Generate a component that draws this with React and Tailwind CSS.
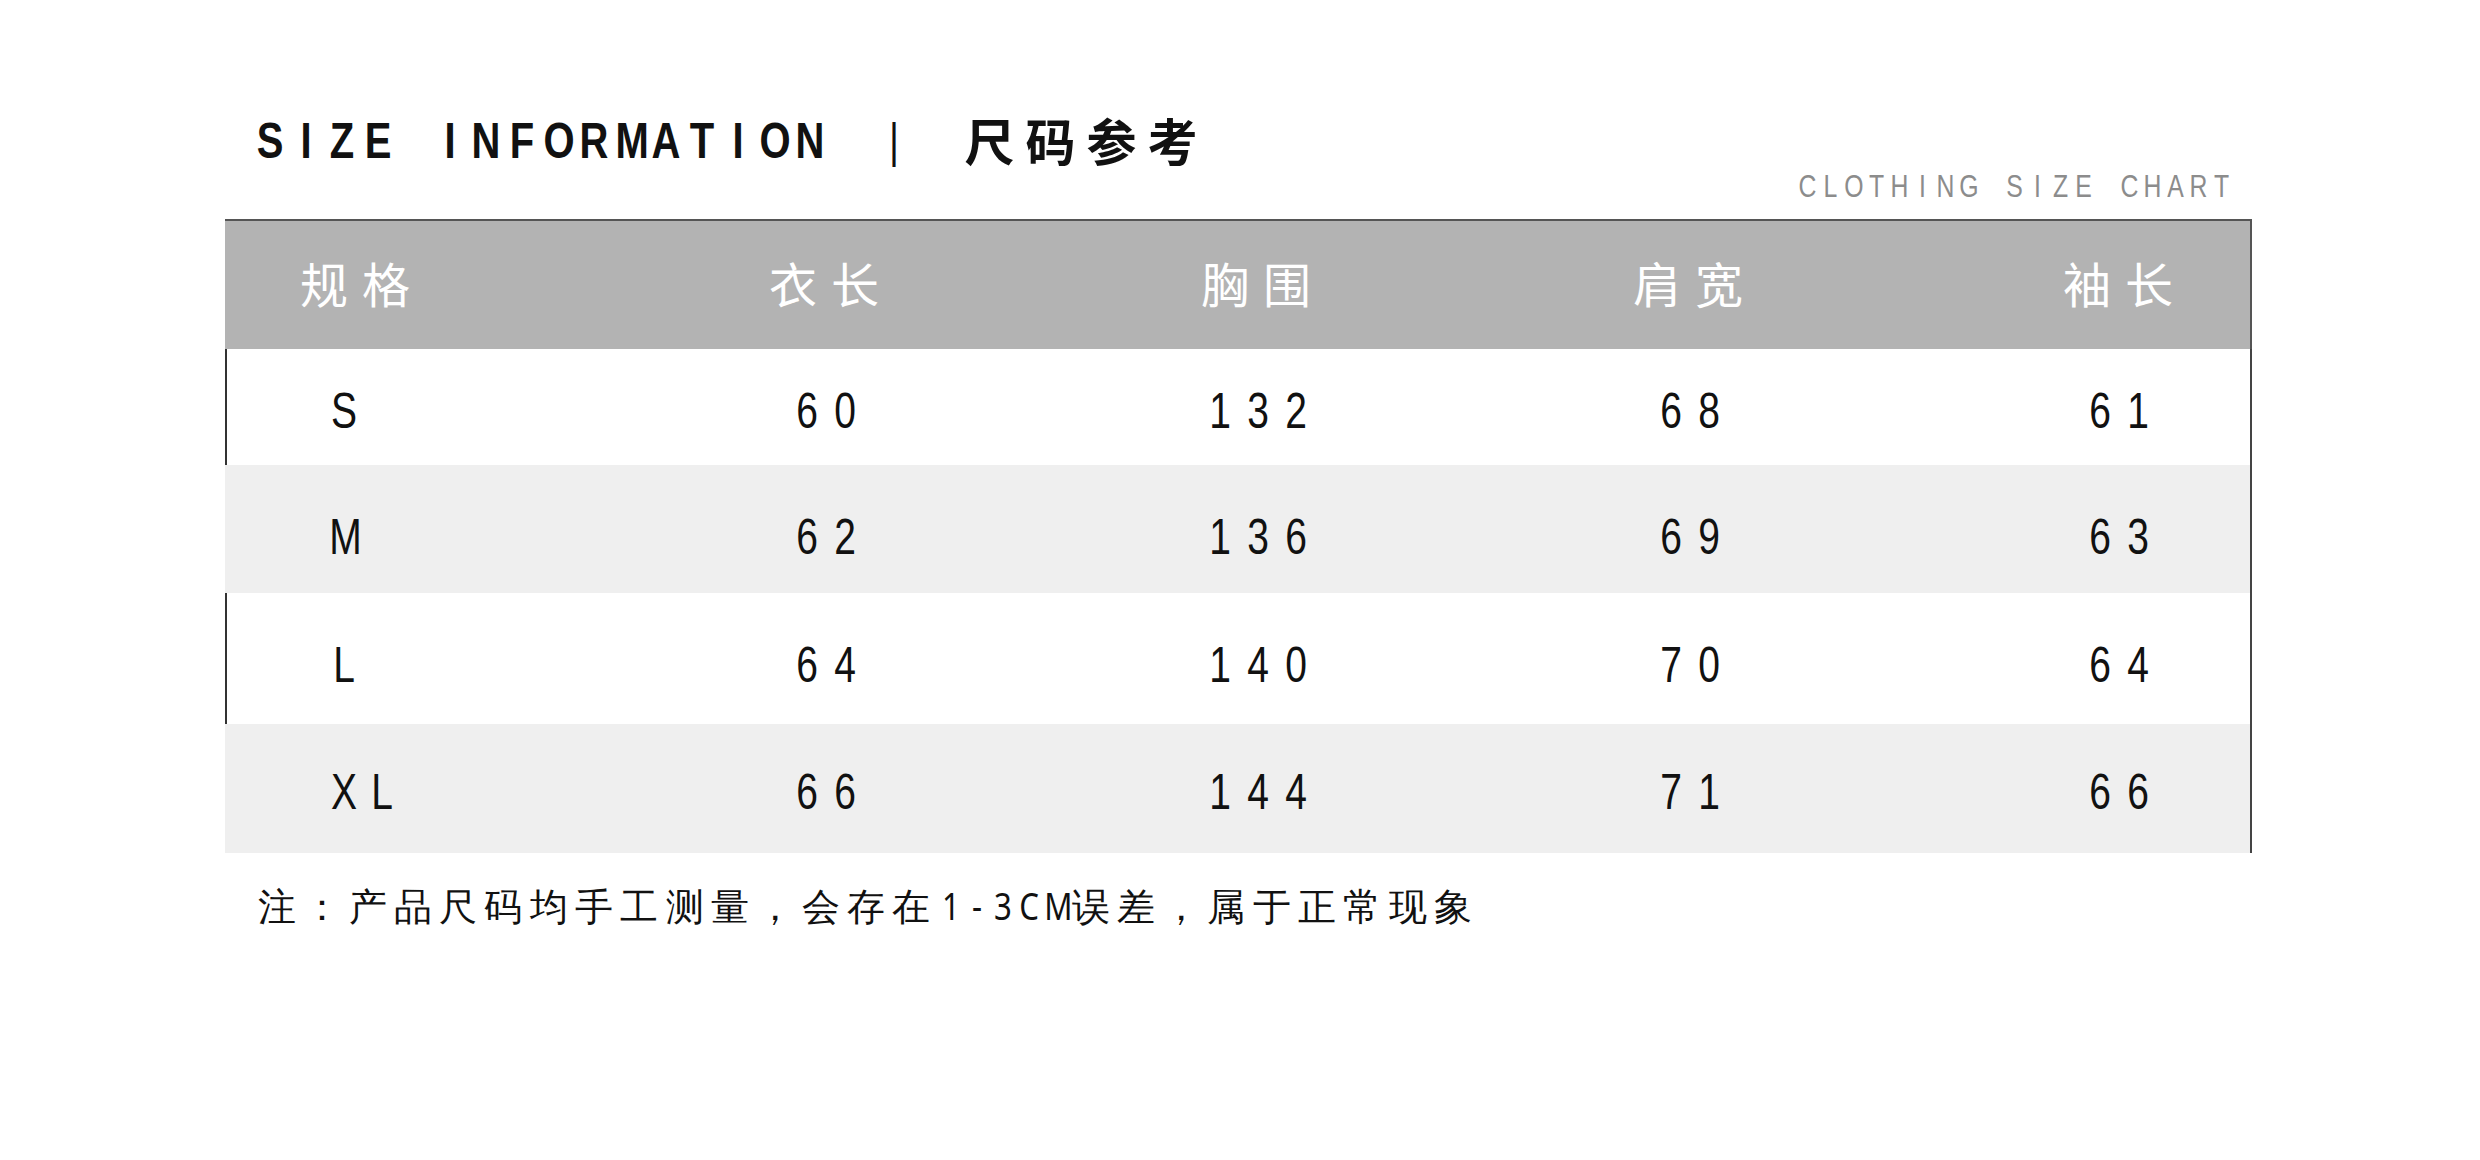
const sans = "font-['Liberation_Sans',Arial,sans-serif]";
const cjk = "font-['Noto_Sans_CJK_SC',sans-serif]";

const rows = [
  { size: "S", vals: ["60", "132", "68", "61"], tone: "bg-white border-l-[#333]", box: "h-[116px] pt-[8px]" },
  { size: "M", vals: ["62", "136", "69", "63"], tone: "bg-[#efefef] border-l-transparent", box: "h-[128px] pt-[16px]" },
  { size: "L", vals: ["64", "140", "70", "64"], tone: "bg-white border-l-[#333]", box: "h-[131px] pt-[12px]" },
  { size: "XL", vals: ["66", "144", "71", "66"], tone: "bg-[#efefef] border-l-transparent", box: "h-[129px] pt-[6px]" },
];

const heads = ["衣长", "胸围", "肩宽", "袖长"];

// the artwork uses evenly pitched, condensed letters: one cell per glyph
function Cells({ text, cell }) {
  return [...text].map((ch, i) => (
    <span key={i} className={cell + " inline-block text-center"}>
      {ch === " " ? "\u00a0" : ch}
    </span>
  ));
}

export default function App() {
  return (
    <div className="w-[2480px] h-[1160px] bg-white overflow-hidden">
      <div className="w-[2252px] pl-[225px] pt-[111px]">
        {/* title */}
        <div className="flex items-center h-[60px] pl-[27px] leading-none text-[#111]">
          <div className={`flex ${sans} font-bold text-[50px]`}>
            <Cells text="SIZE INFORMATION" cell="w-[36px] scale-x-[0.8]" />
          </div>
          <div className={`ml-[48px] w-[36px] text-center ${sans} text-[48px] scale-x-[0.8]`}>|</div>
          <div className={`ml-[47px] flex ${cjk} font-bold text-[50px] pb-[4px]`}>
            <Cells text="尺码参考" cell="w-[61px]" />
          </div>
        </div>

        <div className="flex justify-end items-center h-[30px] pr-[19px] mb-[18px] leading-none">
          <div className={`flex ${sans} text-[31px] text-[#8c8c8c]`}>
            <Cells text="CLOTHING SIZE CHART" cell="w-[23px] scale-x-[0.8]" />
          </div>
        </div>

        {/* table */}
        <div className="w-[2027px]">
          <div className="grid grid-cols-[383px_432px_432px_432px_1fr] items-center h-[130px] pb-[6px] bg-[#b3b3b3] border-t-2 border-r-2 border-[#555] text-white leading-none">
            <div className={`flex pl-[68px] ${cjk} text-[48px]`}>
              <Cells text="规格" cell="w-[62px]" />
            </div>
            {heads.map((h, i) => (
              <div key={h} className={`flex justify-center ${cjk} text-[48px] ${i === 3 ? "pl-[82px]" : ""}`}>
                <Cells text={h} cell="w-[62px]" />
              </div>
            ))}
          </div>

          {rows.map((r) => (
            <div
              key={r.size}
              className={`grid grid-cols-[383px_432px_432px_432px_1fr] items-center border-l-2 border-r-2 border-r-[#444] ${r.tone} ${r.box} ${sans} text-[50px] text-[#111] leading-none`}
            >
              <div className="flex pl-[98px]">
                <Cells text={r.size} cell="w-[38px] scale-x-[0.78]" />
              </div>
              {r.vals.map((v, i) => (
                <div key={i} className={`flex justify-center ${i === 3 ? "pl-[82px]" : ""}`}>
                  <Cells text={v} cell="w-[38px] scale-x-[0.78]" />
                </div>
              ))}
            </div>
          ))}
        </div>

        <div className={`mt-[33px] pl-[33px] flex items-baseline ${sans.replace(",Arial,sans-serif", ",'Noto_Sans_CJK_SC',sans-serif")} text-[38px] tracking-[7.3px] leading-none text-[#111]`}>
          <span>注：产品尺码均手工测量，会存在</span>
          <span className="flex tracking-normal">
            <Cells text="1-3CM" cell="w-[26px] scale-x-[0.82]" />
          </span>
          <span className="ml-[4px]">误差，属于正常现象</span>
        </div>
      </div>
    </div>
  );
}
